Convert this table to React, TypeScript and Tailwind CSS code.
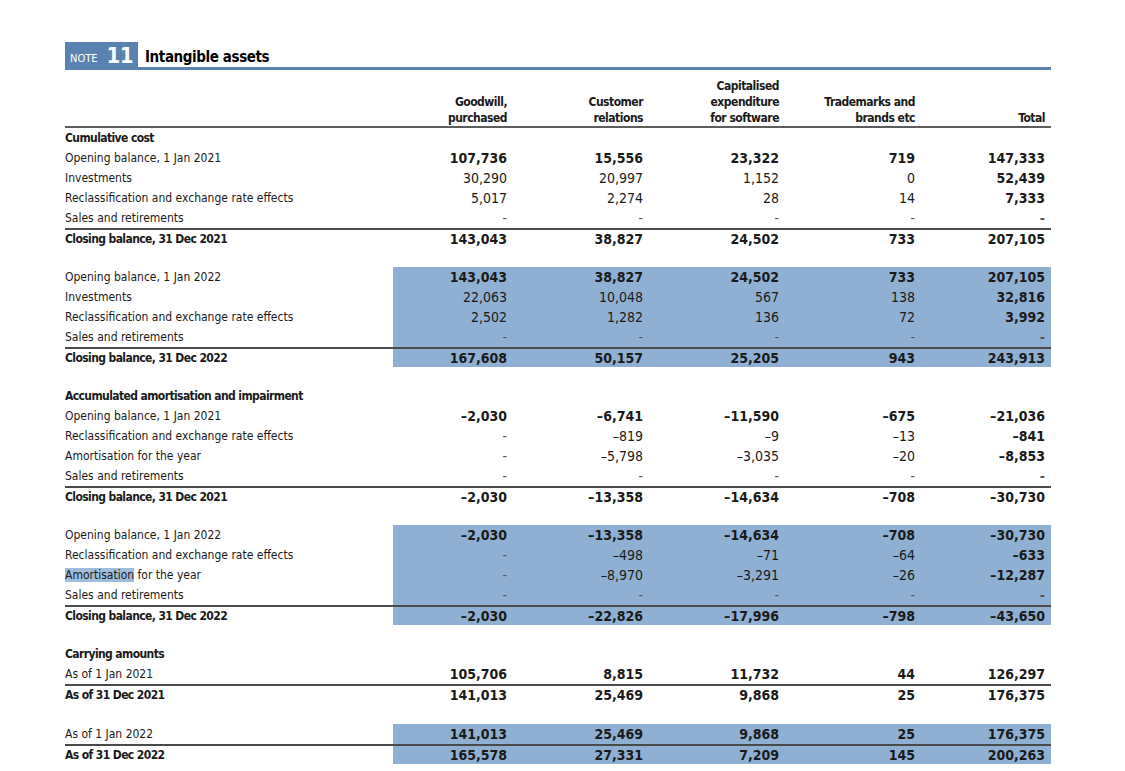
import React from "react";

type Line = {
  label: string;
  vals?: string[];
  lb?: boolean; // label bold
  vb?: boolean; // all values bold
  line?: boolean; // rule above
  hl?: boolean; // selected word in label
};

type Block = { kind: "head"; label: string } | { kind: "gap"; h: string } | { kind: "rows"; shaded?: boolean; rows: Line[] };

const N = "-";

const blocks: Block[] = [
  { kind: "head", label: "Cumulative cost" },
  {
    kind: "rows",
    rows: [
      { label: "Opening balance, 1 Jan 2021", vals: ["107,736", "15,556", "23,322", "719", "147,333"], vb: true },
      { label: "Investments", vals: ["30,290", "20,997", "1,152", "0", "52,439"] },
      { label: "Reclassification and exchange rate effects", vals: ["5,017", "2,274", "28", "14", "7,333"] },
      { label: "Sales and retirements", vals: [N, N, N, N, N] },
      { label: "Closing balance, 31 Dec 2021", vals: ["143,043", "38,827", "24,502", "733", "207,105"], lb: true, vb: true, line: true },
    ],
  },
  { kind: "gap", h: "h-[19px]" },
  {
    kind: "rows",
    shaded: true,
    rows: [
      { label: "Opening balance, 1 Jan 2022", vals: ["143,043", "38,827", "24,502", "733", "207,105"], vb: true },
      { label: "Investments", vals: ["22,063", "10,048", "567", "138", "32,816"] },
      { label: "Reclassification and exchange rate effects", vals: ["2,502", "1,282", "136", "72", "3,992"] },
      { label: "Sales and retirements", vals: [N, N, N, N, N] },
      { label: "Closing balance, 31 Dec 2022", vals: ["167,608", "50,157", "25,205", "943", "243,913"], lb: true, vb: true, line: true },
    ],
  },
  { kind: "gap", h: "h-[19px]" },
  { kind: "head", label: "Accumulated amortisation and impairment" },
  {
    kind: "rows",
    rows: [
      { label: "Opening balance, 1 Jan 2021", vals: ["–2,030", "–6,741", "–11,590", "–675", "–21,036"], vb: true },
      { label: "Reclassification and exchange rate effects", vals: [N, "–819", "–9", "–13", "–841"] },
      { label: "Amortisation for the year", vals: [N, "–5,798", "–3,035", "–20", "–8,853"] },
      { label: "Sales and retirements", vals: [N, N, N, N, N] },
      { label: "Closing balance, 31 Dec 2021", vals: ["–2,030", "–13,358", "–14,634", "–708", "–30,730"], lb: true, vb: true, line: true },
    ],
  },
  { kind: "gap", h: "h-[19px]" },
  {
    kind: "rows",
    shaded: true,
    rows: [
      { label: "Opening balance, 1 Jan 2022", vals: ["–2,030", "–13,358", "–14,634", "–708", "–30,730"], vb: true },
      { label: "Reclassification and exchange rate effects", vals: [N, "–498", "–71", "–64", "–633"] },
      { label: "Amortisation for the year", vals: [N, "–8,970", "–3,291", "–26", "–12,287"], hl: true },
      { label: "Sales and retirements", vals: [N, N, N, N, N] },
      { label: "Closing balance, 31 Dec 2022", vals: ["–2,030", "–22,826", "–17,996", "–798", "–43,650"], lb: true, vb: true, line: true },
    ],
  },
  { kind: "gap", h: "h-[19px]" },
  { kind: "head", label: "Carrying amounts" },
  {
    kind: "rows",
    rows: [
      { label: "As of 1 Jan 2021", vals: ["105,706", "8,815", "11,732", "44", "126,297"], vb: true },
      { label: "As of 31 Dec 2021", vals: ["141,013", "25,469", "9,868", "25", "176,375"], lb: true, vb: true, line: true },
    ],
  },
  { kind: "gap", h: "h-5" },
  {
    kind: "rows",
    shaded: true,
    rows: [
      { label: "As of 1 Jan 2022", vals: ["141,013", "25,469", "9,868", "25", "176,375"], vb: true },
      { label: "As of 31 Dec 2022", vals: ["165,578", "27,331", "7,209", "145", "200,263"], lb: true, vb: true, line: true },
    ],
  },
];

const grid = "grid grid-cols-[328px_120px_136px_136px_136px_130px]";

function Row({ r, shaded }: { r: Line; shaded?: boolean }) {
  const rule = r.line ? "border-t-2 border-[#4a4a4a]" : "";
  return (
    <div className={`${grid} h-5 leading-[18px]`}>
      <div className={`${rule} flex items-center ${r.lb ? "font-bold tracking-[-0.6px]" : ""}`}>
        {r.hl ? (
          <span>
            <span className="bg-[#9fbddb]">Amortisation</span> for the year
          </span>
        ) : (
          r.label
        )}
      </div>
      {r.vals?.map((v, i) => {
        const bold = r.vb || i === 4;
        const nil = v === N;
        return (
          <div
            key={i}
            className={`${rule} ${shaded ? "bg-[#8fb0d3]" : ""} flex items-center justify-end pr-[6px] text-[14px] ${
              bold ? "font-bold" : ""
            } ${nil ? "text-[12px] text-[#555]" : ""}`}
          >
            {v}
          </div>
        );
      })}
    </div>
  );
}

export default function App() {
  return (
    <div className="min-h-[771px] w-[1125px] bg-white text-[#1a1a1a] font-['DejaVu_Sans_Condensed','Liberation_Sans_Narrow','Liberation_Sans',sans-serif] text-[12px]">
      <div className="ml-[65px] w-[986px] pt-[42px]">
        {/* note title */}
        <div className="flex items-end border-b-[3px] border-[#5a82b0]">
          <div className="flex h-[25px] w-[73px] items-end bg-[#5a82b0] pl-[5px] text-white">
            <span className="mb-[3px] text-[11px] leading-none">NOTE</span>
            <span className="ml-[9px] text-[22px] font-bold leading-[22px] tracking-[-0.5px]">11</span>
          </div>
          <div className="mb-[2px] ml-[7px] text-[15px] font-bold leading-none tracking-[-0.4px] text-black">
            Intangible assets
          </div>
        </div>

        {/* column heads */}
        <div className={`${grid} mt-[8px] border-b-2 border-[#5c5c5c] font-bold leading-4 tracking-[-0.5px]`}>
          <div />
          <div className="flex items-end justify-end pr-[6px] text-right">
            Goodwill,
            <br />
            purchased
          </div>
          <div className="flex items-end justify-end pr-[6px] text-right">
            Customer
            <br />
            relations
          </div>
          <div className="flex items-end justify-end pr-[6px] text-right">
            Capitalised
            <br />
            expenditure
            <br />
            for software
          </div>
          <div className="flex items-end justify-end pr-[6px] text-right">
            Trademarks and
            <br />
            brands etc
          </div>
          <div className="flex items-end justify-end pr-[6px] text-right">Total</div>
        </div>

        {blocks.map((b, i) => {
          if (b.kind === "head")
            return (
              <div key={i} className="flex h-5 items-center font-bold tracking-[-0.6px]">
                {b.label}
              </div>
            );
          if (b.kind === "gap") return <div key={i} className={b.h} />;
          return (
            <div key={i}>
              {b.rows.map((r, j) => (
                <Row key={j} r={r} shaded={b.shaded} />
              ))}
            </div>
          );
        })}
      </div>
    </div>
  );
}
